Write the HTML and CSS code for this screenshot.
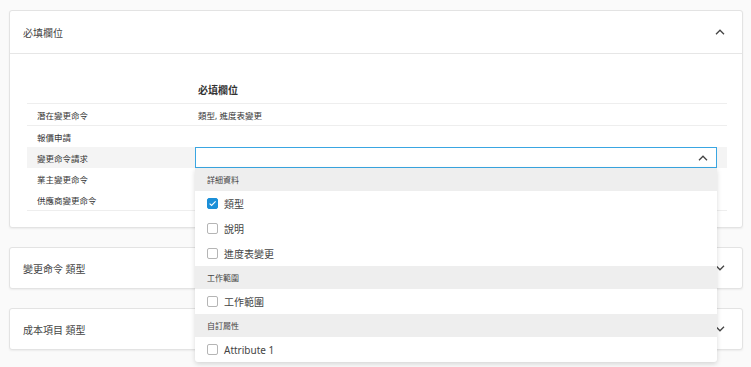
FILE: index.html
```html
<!DOCTYPE html>
<html lang="zh-Hant">
<head>
<meta charset="utf-8">
<title>必填欄位</title>
<link rel="stylesheet" href="styles.css">
</head>
<body>
<div class="page">
  <section class="panel open">
    <div class="panel-head">
      <span class="panel-title">必填欄位</span>
      <svg class="chev" width="10" height="6" viewBox="0 0 10 6"><path d="M1 5.2 L5 1.2 L9 5.2" fill="none" stroke="#444" stroke-width="1.3"/></svg>
    </div>
    <div class="panel-body">
      <div class="table">
        <div class="thead">
          <div class="c1"></div>
          <div class="c2 th">必填欄位</div>
        </div>
        <div class="row line">
          <div class="c1">潛在變更命令</div>
          <div class="c2">類型, 進度表變更</div>
        </div>
        <div class="row">
          <div class="c1">報價申請</div>
          <div class="c2"></div>
        </div>
        <div class="row hl">
          <div class="c1">變更命令請求</div>
          <div class="c2 selcell">
            <div class="select">
              <svg class="chev" width="10" height="6" viewBox="0 0 10 6"><path d="M1 5.2 L5 1.2 L9 5.2" fill="none" stroke="#444" stroke-width="1.3"/></svg>
            </div>
            <div class="dropdown">
              <div class="group first">詳細資料</div>
              <div class="item"><span class="cb checked"><svg width="9" height="9" viewBox="0 0 9 9"><path d="M1.6 4.6 L3.6 6.5 L7.6 2.4" fill="none" stroke="#fff" stroke-width="1.1"/></svg></span><span>類型</span></div>
              <div class="item"><span class="cb"></span><span>說明</span></div>
              <div class="item"><span class="cb"></span><span>進度表變更</span></div>
              <div class="group">工作範圍</div>
              <div class="item"><span class="cb"></span><span>工作範圍</span></div>
              <div class="group">自訂屬性</div>
              <div class="item"><span class="cb"></span><span>Attribute 1</span></div>
            </div>
          </div>
        </div>
        <div class="row">
          <div class="c1">業主變更命令</div>
          <div class="c2"></div>
        </div>
        <div class="row last">
          <div class="c1">供應商變更命令</div>
          <div class="c2"></div>
        </div>
      </div>
    </div>
  </section>
  <section class="panel">
    <div class="panel-head closed">
      <span class="panel-title">變更命令 類型</span>
      <svg class="chev" width="10" height="6" viewBox="0 0 10 6"><path d="M1 0.8 L5 4.8 L9 0.8" fill="none" stroke="#444" stroke-width="1.3"/></svg>
    </div>
  </section>
  <section class="panel">
    <div class="panel-head closed">
      <span class="panel-title">成本項目 類型</span>
      <svg class="chev" width="10" height="6" viewBox="0 0 10 6"><path d="M1 0.8 L5 4.8 L9 0.8" fill="none" stroke="#444" stroke-width="1.3"/></svg>
    </div>
  </section>
</div>
</body>
</html>
```

FILE: styles.css
```css
html, body {
  margin: 0;
  padding: 0;
  background: #fafafa;
}
body {
  font-family: "Noto Sans", "Noto Sans CJK TC", sans-serif;
  color: #333;
  min-height: 367px;
}
.page {
  padding: 10px 8px 20px 9px;
  display: flex;
  flex-direction: column;
  gap: 19px;
}
.panel {
  background: #fff;
  border: 1px solid #e3e3e3;
  border-radius: 3px;
  box-shadow: 0 1px 2px rgba(0, 0, 0, 0.06);
}
.panel-head {
  height: 42px;
  display: flex;
  align-items: center;
  justify-content: space-between;
  padding: 0 17px 0 13px;
  border-bottom: 1px solid #e6e6e6;
}
.panel-head.closed {
  height: 40px;
  border-bottom: none;
}
.panel-title {
  font-size: 10px;
  color: #444;
}
.panel-body {
  padding: 20px 15px 16px 17px;
}
.table {
  display: flex;
  flex-direction: column;
  font-size: 8.5px;
  color: #333;
}
.thead {
  height: 29px;
  display: flex;
  align-items: flex-end;
  border-bottom: 1px solid #eeeeee;
}
.thead .th {
  font-size: 10px;
  font-weight: 600;
  color: #333;
  padding-bottom: 6px;
  padding-left: 3px;
}
.row {
  height: 21px;
  display: flex;
  align-items: center;
}
.row.line {
  border-bottom: 1px solid #eeeeee;
}
.row.last {
  border-bottom: 1px solid #eeeeee;
}
.row.hl {
  background: #f4f4f4;
}
.c1 {
  width: 158px;
  padding-left: 10px;
  flex: none;
}
.c2 {
  flex: 1;
  padding-left: 3px;
}
.selcell {
  padding-left: 0;
  padding-right: 10px;
  align-self: stretch;
  position: relative;
}
.select {
  height: 100%;
  box-sizing: border-box;
  border: 1px solid #3aa6e2;
  background: #fff;
  display: flex;
  align-items: center;
  justify-content: flex-end;
  padding-right: 8px;
}
.dropdown {
  position: absolute;
  top: 100%;
  left: 0;
  right: 10px;
  background: #fff;
  z-index: 10;
  border-radius: 0 0 3px 3px;
  box-shadow: 0 2px 5px rgba(0, 0, 0, 0.15);
}
.group {
  height: 23px;
  background: #eeeeee;
  font-size: 8px;
  color: #444;
  display: flex;
  align-items: center;
  padding-left: 12px;
}
.item {
  height: 25px;
  display: flex;
  align-items: center;
  padding-left: 12px;
  font-size: 10px;
  color: #444;
  gap: 6px;
}
.cb {
  width: 11px;
  height: 11px;
  box-sizing: border-box;
  border: 1px solid #b5b5b5;
  border-radius: 2px;
  background: #fff;
  display: flex;
  align-items: center;
  justify-content: center;
}
.cb.checked {
  background: #1b8fd8;
  border-color: #1b8fd8;
}
.cb svg {
  display: block;
}
.chev {
  display: block;
}
```
